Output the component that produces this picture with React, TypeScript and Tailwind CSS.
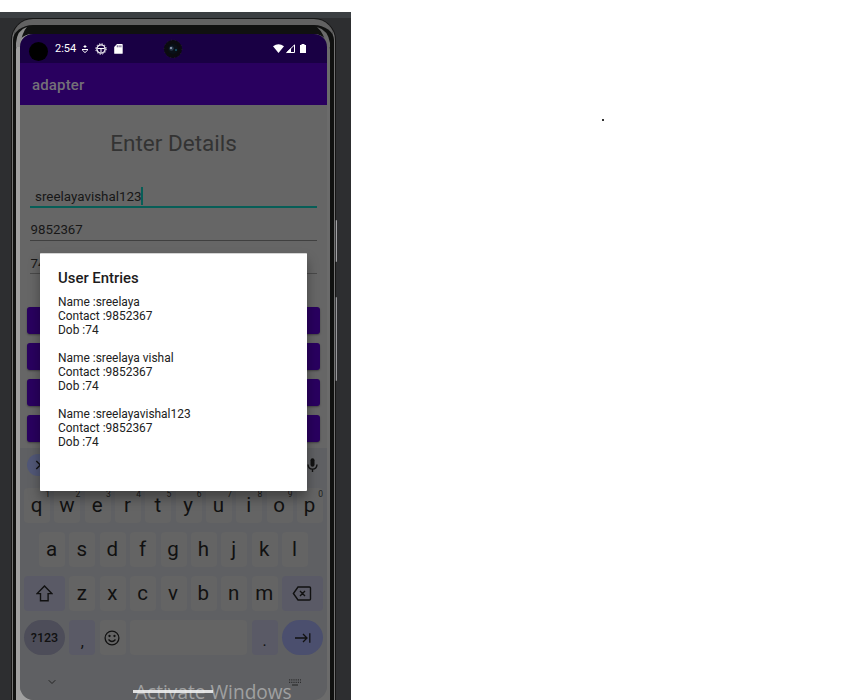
import React from "react";

const rowOne = ["q", "w", "e", "r", "t", "y", "u", "i", "o", "p"];
const rowTwo = ["a", "s", "d", "f", "g", "h", "j", "k", "l"];
const rowThree = ["z", "x", "c", "v", "b", "n", "m"];

const entries = [
  { name: "sreelaya", contact: "9852367", dob: "74" },
  { name: "sreelaya vishal", contact: "9852367", dob: "74" },
  { name: "sreelayavishal123", contact: "9852367", dob: "74" },
];

function Key({ label, hint }: { label: string; hint?: string }) {
  return (
    <div className="relative flex h-[35px] w-[26px] shrink-0 items-center justify-center rounded-[4px] bg-[#646464] pr-px text-[20.5px] leading-[35px] text-[#111111]">
      {label}
      {hint && (
        <span className="absolute top-[2px] right-0 text-[8.5px] leading-[9px] text-[#1c1c1c]">{hint}</span>
      )}
    </div>
  );
}

function StatusBar() {
  return (
    <div className="relative flex h-[29px] shrink-0 items-center bg-[#190044] pl-[9px]">
      <div className="mt-[6px] h-[19px] w-[19px] shrink-0 rounded-full bg-black" />
      <span className="ml-[7px] w-[27px] text-[11px] leading-[29px] text-white">2:54</span>
      <svg className="-ml-px h-[10px] w-[8px]" viewBox="0 0 8 10" fill="none" stroke="#fff">
        <path d="M4 1v3M2.5 2.5h3M1 5.5h6M1.2 6L4 8.6 6.8 6" />
      </svg>
      <svg className="ml-[6px] h-[12px] w-[12px]" viewBox="0 0 12 12" fill="none" stroke="#fff">
        <circle cx="6" cy="6" r="4.1" strokeWidth="1.3" />
        <circle cx="6" cy="6" r="5.2" strokeDasharray="1.3 1.42" />
        <path d="M2.5 5.5h7M6 5.5v4" />
      </svg>
      <svg className="ml-[7px] h-[10px] w-[9px]" viewBox="0 0 9 10">
        <path d="M3 0h5q.7 0 .7.8v8.4q0 .6-.7.6H.8q-.6 0-.6-.6V3z" fill="#fff" />
        <path d="M3.3 1.3v2M5.1 1.3v2M6.9 1.3v2" stroke="#190044" strokeWidth=".7" />
      </svg>
      <svg className="absolute top-[5px] left-[143px] h-[20px] w-[20px]" viewBox="0 0 20 20">
        <circle cx="10" cy="10" r="9" fill="#0b0b10" stroke="#252526" strokeDasharray="1 3" />
        <circle cx="10" cy="10" r="5" fill="#091018" />
        <circle cx="8.5" cy="9.5" r="2.2" fill="#29384b" />
        <circle cx="8" cy="9" r="1" fill="#9eabc0" />
        <circle cx="13" cy="11" r=".8" fill="#2488a7" />
      </svg>
      <svg className="absolute top-[10px] left-[253px] h-[10px] w-[34px]" viewBox="0 0 34 10">
        <path d="M0 2.3Q5.5-2 11 2.3L5.5 9z" fill="#fff" />
        <path d="M13.8 8.5L21.5.9v7.6z" fill="#190044" stroke="#fff" />
        <path d="M13 9l5-5v5z" fill="#fff" />
        <path d="M28.5 0h3v1H33v8h-6V1h1.5z" fill="#fff" />
      </svg>
    </div>
  );
}

function Keyboard() {
  return (
    <div className="flex min-h-0 flex-1 flex-col overflow-hidden rounded-b-[14px] bg-[#5f6063]">
      <div className="flex h-[40px] shrink-0 justify-between pt-[6px] pr-[8px] pl-[7px]">
        <div className="flex h-[22px] w-[22px] items-center justify-center rounded-full bg-[#515777]">
          <svg className="h-[10px] w-[10px]" viewBox="0 0 10 10" fill="none" stroke="#111" strokeWidth="1.4">
            <path d="M3.3 1l4 4-4 4" />
          </svg>
        </div>
        <svg className="mt-[4px] h-[15px] w-[13px]" viewBox="0 0 13 15">
          <rect x="4.5" y=".3" width="4" height="8.5" rx="2" fill="#111" />
          <path d="M2 6.5q.3 4.6 4.5 4.6T11 6.5M6.5 11v3" fill="none" stroke="#111" strokeWidth="1.4" />
        </svg>
      </div>
      <div className="mx-[4px] flex shrink-0 flex-col gap-[9px]">
        <div className="flex justify-between">
          {rowOne.map((letter, i) => (
            <Key key={letter} label={letter} hint={String((i + 1) % 10)} />
          ))}
        </div>
        <div className="flex justify-between px-[15px]">
          {rowTwo.map((letter) => (
            <Key key={letter} label={letter} />
          ))}
        </div>
        <div className="flex justify-between">
          <div className="flex h-[35px] w-[41px] items-center justify-center rounded-[4px] bg-[#5a5a66]">
            <svg className="mr-px h-[17px] w-[17px]" viewBox="0 0 17 17" fill="none" stroke="#111" strokeWidth="1.4">
              <path d="M8.5 1L1.2 8.6h3.3v7.2h7.6V8.6h3.7z" />
            </svg>
          </div>
          {rowThree.map((letter) => (
            <Key key={letter} label={letter} />
          ))}
          <div className="flex h-[35px] w-[41px] items-center justify-center rounded-[4px] bg-[#5a5a66]">
            <svg className="mr-px h-[15px] w-[20px]" viewBox="0 0 20 15" fill="none" stroke="#111" strokeWidth="1.4">
              <path d="M6 1h11.5q1 0 1 1v11q0 1-1 1H6L1.4 7.5zM8 5l5 5M13 5l-5 5" />
            </svg>
          </div>
        </div>
        <div className="flex justify-between">
          <div className="flex h-[35px] w-[41px] items-center justify-center rounded-[17.5px] bg-[#4d4d59] pt-px text-[12.5px] font-medium text-[#111]">
            ?123
          </div>
          <div className="flex h-[35px] w-[26px] items-center justify-center rounded-[4px] bg-[#5a5a66] pt-[9px] text-[16px] text-[#111]">
            ,
          </div>
          <div className="flex h-[35px] w-[26px] items-center justify-center rounded-[4px] bg-[#646464]">
            <svg className="mr-px h-[16px] w-[16px]" viewBox="0 0 16 16" fill="none" stroke="#111" strokeWidth="1.3">
              <circle cx="8" cy="8" r="6.9" />
              <path d="M4.5 9.5q3.5 4 7 0" />
              <circle cx="5.5" cy="6" r=".5" fill="#111" />
              <circle cx="10.5" cy="6" r=".5" fill="#111" />
            </svg>
          </div>
          <div className="h-[35px] w-[117px] rounded-[4px] bg-[#646464]" />
          <div className="flex h-[35px] w-[26px] items-center justify-center rounded-[4px] bg-[#5a5a66] pt-[7px] text-[16px] text-[#111]">
            .
          </div>
          <div className="flex h-[35px] w-[41px] items-center justify-center rounded-[17.5px] bg-[#4b4f6e]">
            <svg className="h-[12px] w-[17px]" viewBox="0 0 17 12" fill="none" stroke="#111" strokeWidth="1.3">
              <path d="M1 6h12M9 2l4 4-4 4M15.8 1.2v9.6" />
            </svg>
          </div>
        </div>
      </div>
      <div className="flex justify-between pt-[24px] pr-[25px] pl-[28px]">
        <svg className="h-[6px] w-[8px]" viewBox="0 0 8 6" fill="none" stroke="#252525">
          <path d="M.7 1.2L4 4.5l3.3-3.3" />
        </svg>
        <svg className="h-[7px] w-[14px]" viewBox="0 0 14 7" fill="none" stroke="#222">
          <path d="M1 .9h12M1 3.3h12" strokeDasharray="1.2 1" />
          <path d="M4 6h6" />
        </svg>
      </div>
    </div>
  );
}

function EntriesDialog() {
  return (
    <div className="absolute top-[219px] left-[20px] h-[238px] w-[267px] rounded-[1px] border-t border-[#d4d4d4] bg-white pt-[15px] pl-[18px] text-[#212121] shadow-[0_7px_12px_rgba(0,0,0,0.35)]">
      <h2 className="text-[14.9px] leading-[18px] font-medium text-[#1c1c1c]">User Entries</h2>
      <div className="mt-[7.6px] flex flex-col gap-[14px] text-[11.95px] leading-[14.1px]">
        {entries.map((entry) => (
          <div key={entry.name}>
            <p>Name :{entry.name}</p>
            <p>Contact :{entry.contact}</p>
            <p>Dob :{entry.dob}</p>
          </div>
        ))}
      </div>
    </div>
  );
}

export default function App() {
  return (
    <div className="flex h-[700px] w-[864px] overflow-hidden bg-white pt-[12px] font-[Roboto,sans-serif]">
      <main className="relative h-[688px] w-[351px] shrink-0 overflow-hidden bg-[#2d2e30]">
        <div className="h-[6px] bg-[#3b3f42]" />
        <div className="ml-[11px] h-[720px] w-[325px] rounded-[22px] border border-[#161616] bg-[#161616]">
          <div className="h-full rounded-[21px] border border-t-[6px] border-x-[#737373] border-t-[#626262] bg-[#101110] pt-[9px] pl-[3px]">
            <div className="relative w-[314px] rounded-t-[16px] bg-linear-to-r from-[#a0a0a0] from-50% to-[#6b6b6b] to-50% pr-[3px] pl-[4px]">
              <svg className="absolute -top-[7px] left-0 h-[20px] w-[314px]" viewBox="0 0 314 20">
                <path d="M0 20V16Q1 3 11 0Q6 5 4 20z" fill="#8d8d8d" />
                <path d="M314 20V16Q312 3 301 0Q308 6 311 20z" fill="#6b6b6b" />
              </svg>
              <div className="relative flex h-[666px] w-[307px] flex-col rounded-t-[13px] rounded-b-[14px] bg-[#666666]">
                <div className="overflow-hidden rounded-t-[13px]">
                  <StatusBar />
                  <header className="h-[42px] bg-[#29005f] pl-[12px] text-[15px] leading-[44px] font-medium tracking-[0.15px] text-[#747078]">
                    adapter
                  </header>
                </div>
                <div className="h-[343px] shrink-0">
                  <h1 className="pt-[24px] text-center text-[22.5px] leading-[29px] text-[#333333]">Enter Details</h1>
                  <div className="mx-[10px] mt-[28px] flex h-[22px] items-center border-b-2 border-[#075e57] pl-[5px] text-[13.4px] text-[#171717]">
                    <span className="pt-[2px]">sreelayavishal123</span>
                    <span className="-ml-px h-[18px] w-[2px] bg-[#075e57]" />
                  </div>
                  <div className="mx-[10px] h-[33px] border-b border-[#404040] pt-[13px] pl-[0.5px] text-[13.3px] leading-[17px] text-[#171717]">
                    9852367
                  </div>
                  <div className="mx-[10px] h-[33px] border-b border-[#494949] pt-[14px] pl-[0.5px] text-[13.3px] leading-[17px] text-[#171717]">
                    74
                  </div>
                  <div className="mx-[7px] mt-[33px] flex flex-col gap-[9px]">
                    {[0, 1, 2, 3].map((button) => (
                      <div key={button} className="h-[27px] rounded-[3px] bg-[#29005f] shadow-[0_1px_2px_rgba(0,0,0,0.35)]" />
                    ))}
                  </div>
                </div>
                <Keyboard />
                <EntriesDialog />
              </div>
            </div>
          </div>
        </div>
        <div className="absolute top-[208px] left-[335px] h-[42px] w-[2px] rounded-full border-r border-[#a2a2a5] bg-[#37383a]" />
        <div className="absolute top-[285px] left-[335px] h-[84px] w-[2px] rounded-full border-r border-[#98989b] bg-[#37383a]" />
        <div className="absolute top-[668px] left-[135px] h-[20px] font-['Open_Sans',sans-serif] text-[19.1px] leading-[24px] whitespace-nowrap text-[#a0a0a1]">
          Activate Windows
        </div>
        <div className="absolute top-[678px] left-[133px] h-[2.5px] w-[80px] bg-[#eeeeee]/90" />
      </main>
      <div className="mt-[107px] ml-[251px] h-[2px] w-[2px] bg-[#333333]" />
    </div>
  );
}
